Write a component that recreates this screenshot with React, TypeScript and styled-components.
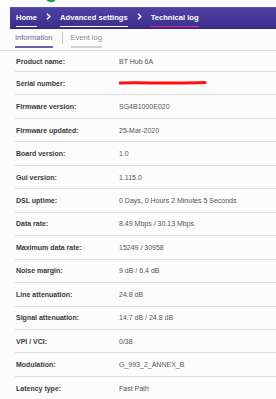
import React from "react";
import styled, { createGlobalStyle } from "styled-components";

const Global = createGlobalStyle`
  html, body { margin: 0; padding: 0; background: #fcfcfc; }
  body { font-family: "Liberation Sans", Arial, sans-serif; }
`;

const Page = styled.div`
  width: 276px;
  height: 399px;
  overflow: hidden;
  background: #fcfcfc;
`;

const TopStrip = styled.div`
  height: 7px;
  background: #ffffff;
  display: flex;
`;

const Header = styled.nav`
  margin-left: 10px;
  height: 22px;
  box-sizing: border-box;
  background: linear-gradient(#4f41a3, #3c2f8c);
  border-top: 1px solid #5c4fb4;
  border-bottom: 1px solid #35287e;
  display: flex;
  align-items: flex-end;
  padding: 0 0 1.5px 6px;
  gap: 9px;
`;

const Crumb = styled.span<{ $active?: boolean }>`
  color: #ffffff;
  font-weight: 700;
  font-size: 7.6px;
  line-height: 10px;
  padding-bottom: 3px;
  border-bottom: 1px solid ${(p) => (p.$active ? "#e0278a" : "#ffffff")};
  white-space: nowrap;
`;

const ChevronWrap = styled.span`
  display: flex;
  align-items: center;
  height: 14px;
  padding-bottom: 3px;
`;

const Chevron = () => (
  <ChevronWrap>
    <svg width="5" height="7" viewBox="0 0 5 7">
      <path d="M1 0.8 L3.8 3.5 L1 6.2" fill="none" stroke="#ffffff" strokeWidth="1.5" />
    </svg>
  </ChevronWrap>
);

const Tabs = styled.div`
  height: 22px;
  box-sizing: border-box;
  border-bottom: 1px solid #dcdcdc;
  padding-left: 15px;
  display: flex;
  align-items: flex-end;
  padding-bottom: 2px;
  background: #fcfcfc;
`;

const Tab = styled.span<{ $active?: boolean }>`
  font-size: 7.5px;
  line-height: 10px;
  padding-bottom: 3px;
  color: ${(p) => (p.$active ? "#6a6296" : "#8a8a8a")};
  border-bottom: 2px solid ${(p) => (p.$active ? "#6d5fb4" : "#d2d2d2")};
  white-space: nowrap;
`;

const TabSep = styled.span`
  width: 1px;
  height: 12px;
  background: #c8c8c8;
  margin: 0 8px 4px 9px;
`;

const List = styled.div`
  margin-left: 15px;
`;

const Row = styled.div`
  display: grid;
  grid-template-columns: 104px 1fr;
  align-items: center;
  height: 23.46px;
  box-sizing: border-box;
  border-bottom: 1px solid #dcdcdc;
  &:first-child {
    height: 21px;
  }
`;

const Label = styled.span`
  font-weight: 700;
  font-size: 7px;
  color: #3a3a3a;
  padding-left: 1px;
  white-space: nowrap;
`;

const Value = styled.span`
  font-size: 7px;
  color: #555555;
  white-space: nowrap;
  display: flex;
  align-items: center;
`;

const Redacted = () => (
  <svg width="90" height="6" viewBox="0 0 90 6">
    <path d="M1 3 C20 2.2 50 3.8 86 2.6" stroke="#ff1010" strokeWidth="3" fill="none" strokeLinecap="round" />
  </svg>
);

const rows: [string, React.ReactNode][] = [
  ["Product name:", "BT Hub 6A"],
  ["Serial number:", <Redacted key="r" />],
  ["Firmware version:", "SG4B1000E020"],
  ["Firmware updated:", "25-Mar-2020"],
  ["Board version:", "1.0"],
  ["Gui version:", "1.115.0"],
  ["DSL uptime:", "0 Days, 0 Hours 2 Minutes 5 Seconds"],
  ["Data rate:", "8.49 Mbps / 30.13 Mbps"],
  ["Maximum data rate:", "15249 / 30958"],
  ["Noise margin:", "9 dB / 6.4 dB"],
  ["Line attenuation:", "24.8 dB"],
  ["Signal attenuation:", "14.7 dB / 24.8 dB"],
  ["VPI / VCI:", "0/38"],
  ["Modulation:", "G_993_2_ANNEX_B"],
  ["Latency type:", "Fast Path"],
];

export default function App() {
  return (
    <Page>
      <Global />
      <TopStrip>
        <svg width="276" height="7" viewBox="0 0 276 7">
          <circle cx="51" cy="-3.5" r="5.8" fill="#1a9a4a" />
        </svg>
      </TopStrip>
      <Header>
        <Crumb>Home</Crumb>
        <Chevron />
        <Crumb>Advanced settings</Crumb>
        <Chevron />
        <Crumb $active>Technical log</Crumb>
      </Header>
      <Tabs>
        <Tab $active>Information</Tab>
        <TabSep />
        <Tab>Event log</Tab>
      </Tabs>
      <List>
        {rows.map(([l, v]) => (
          <Row key={l}>
            <Label>{l}</Label>
            <Value>{v}</Value>
          </Row>
        ))}
      </List>
    </Page>
  );
}
